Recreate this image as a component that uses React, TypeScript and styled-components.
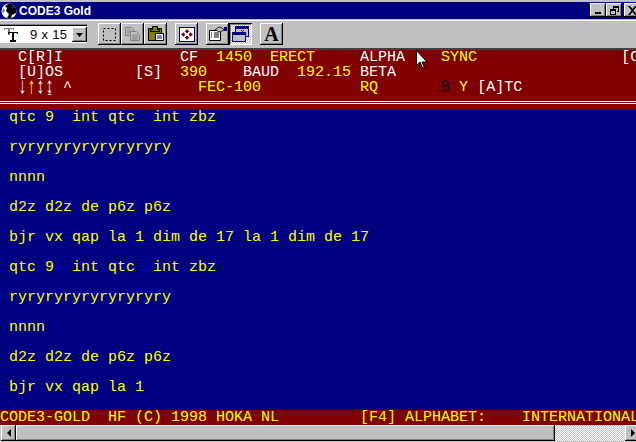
import React, { FC, ReactNode } from 'react';
import styled, { createGlobalStyle, css } from 'styled-components';

const GlobalStyle = createGlobalStyle`
    html, body {
        margin: 0;
        padding: 0;
        background: #c0c0c0;
    }
`;

const raised = css`
    box-shadow: inset -1px -1px 0 #000, inset 1px 1px 0 #fff, inset -2px -2px 0 #808080;
`;

const Window = styled.div`
    position: relative;
    width: 636px;
    height: 442px;
    overflow: hidden;
    display: flex;
    flex-direction: column;
    background: #c0c0c0;
    padding-top: 2px;
    box-sizing: border-box;
`;

const TitleBar = styled.div`
    height: 17px;
    flex: none;
    background: #000080;
    display: flex;
    align-items: center;
    padding-left: 1px;
    gap: 2px;
`;

const TitleText = styled.span`
    font: bold 12px 'Liberation Sans', Arial, sans-serif;
    color: #fff;
    flex: 1;
`;

const TitleButtons = styled.div`
    display: flex;
    align-self: flex-start;
    margin: 1px -4px 0 0;
`;

const TitleButton = styled.div<{ $gap?: number }>`
    width: 16px;
    height: 14px;
    margin-left: ${(p) => p.$gap ?? 0}px;
    background: #c0c0c0;
    ${raised}
    display: flex;
    align-items: center;
    justify-content: center;
`;

const Toolbar = styled.div`
    height: 31px;
    flex: none;
    box-sizing: border-box;
    border-top: 1px solid #c0c0c0;
    box-shadow: inset 0 1px 0 #fff;
    display: flex;
    align-items: center;
    border-bottom: 2px solid #404040;
`;

const Combo = styled.div`
    width: 88px;
    height: 20px;
    margin-right: 10px;
    box-sizing: border-box;
    background: #fff;
    box-shadow: inset -1px -1px 0 #c0c0c0, inset 0 1px 0 #808080, inset 0 2px 0 #000;
    display: flex;
    align-items: center;
    padding: 2px 1px 1px 4px;
`;

const ComboValue = styled.span`
    flex: 1;
    font: 13px 'Liberation Sans', Arial, sans-serif;
    letter-spacing: 0.3px;
    white-space: pre;
    color: #000;
    margin-left: 12px;
`;

const ComboArrow = styled.div`
    width: 15px;
    height: 15px;
    background: #c0c0c0;
    ${raised}
    display: flex;
    align-items: center;
    justify-content: center;
`;

const ToolButton = styled.div<{ $pressed?: boolean; $gap?: number }>`
    width: 23px;
    height: 22px;
    margin-left: ${(p) => p.$gap ?? 0}px;
    display: flex;
    align-items: center;
    justify-content: center;
    ${(p) =>
        p.$pressed
            ? css`
                  background: repeating-conic-gradient(#c0c0c0 0 25%, #fff 0 50%) 0 0 / 2px 2px;
                  box-shadow: inset 1px 1px 0 #000, inset -1px -1px 0 #fff, inset 2px 2px 0 #808080;
              `
            : raised}
`;

const LetterIcon = styled.span`
    font: bold 20px 'Liberation Serif', serif;
    color: #000;
    line-height: 1;
`;

const Mono = css`
    font-family: 'Liberation Mono', 'DejaVu Sans Mono', monospace;
    font-size: 15px;
    line-height: 15px;
    white-space: pre;
`;

const StatusPanel = styled.div`
    height: 60px;
    flex: none;
    background: #800000;
    box-sizing: border-box;
    position: relative;
`;

const PanelRow = styled.div`
    ${Mono}
    height: 15px;
`;

const Tone = styled.span<{ $tone: 'white' | 'yellow' | 'black' }>`
    color: ${(p) => (p.$tone === 'white' ? '#fff' : p.$tone === 'yellow' ? '#ffff00' : '#000')};
`;

const TallChar = styled.span<{ $tone: 'white' | 'yellow' }>`
    display: inline-block;
    width: 9px;
    text-align: center;
    color: ${(p) => (p.$tone === 'white' ? '#fff' : '#ffff00')};
    transform: scaleY(1.5);
`;

const Rule = styled.div`
    margin-top: 6px;
    height: 1px;
    background: #fff;
    & + & {
        margin-top: 1px;
    }
`;

const Receive = styled.div`
    flex: 1;
    background: #000080;
    display: flex;
    flex-direction: column;
    gap: 15px;
    padding-left: 9px;
    overflow: hidden;
`;

const ReceiveLine = styled.div`
    ${Mono}
    height: 15px;
    color: #ffff00;
`;

const Footer = styled.div`
    ${Mono}
    height: 15px;
    flex: none;
    background: #800000;
    color: #ffff00;
    overflow: hidden;
`;

const ScrollBar = styled.div`
    height: 16px;
    flex: none;
    display: flex;
    align-items: stretch;
    margin-bottom: 1px;
    box-shadow: inset 0 1px 0 #fff;
`;

const ScrollButton = styled.div<{ $overhang?: boolean }>`
    width: 15px;
    flex: none;
    margin: ${(p) => (p.$overhang ? '0 -4px 0 0' : '0 0 0 1px')};
    background: #c0c0c0;
    ${raised}
    display: flex;
    align-items: center;
    justify-content: center;
`;

const ScrollThumb = styled.div`
    width: 539px;
    flex: none;
    background: #c0c0c0;
    ${raised}
`;

const ScrollTrack = styled.div`
    flex: 1;
    background: repeating-conic-gradient(#c0c0c0 0 25%, #fff 0 50%) 0 0 / 2px 2px;
`;

const Pointer = styled.svg`
    position: absolute;
    left: 416px;
    top: 50px;
`;

const AppIcon: FC = () => (
    <svg width="16" height="16" viewBox="0 0 16 16">
        <circle cx="8" cy="8" r="7.5" fill="#fff" />
        <path d="M8 .5A7.5 7.5 0 0 1 15 10L11 12 10 15.500A7.500 7.500 0 0 1 6 15L8 11 5 8 6 5 4 3Z" fill="#000" />
        <path d="M2 5l2 2-1 3-2-1zM12 3l1 1-2 1z" fill="#808080" />
    </svg>
);

const FontIcon: FC = () => (
    <svg width="14" height="14" viewBox="0 0 14 14">
        <path d="M0 0h10v2H9V1H6v6H4V1H1v1H0z" fill="#808080" />
        <path d="M4 4h10v2h-1V5h-3v7h2v2H6v-2h2V5H5v1H4z" fill="#000" />
    </svg>
);

const SelectIcon: FC = () => (
    <svg width="15" height="15" viewBox="0 0 15 15">
        <rect x="1.500" y="1.500" width="12" height="12" fill="none" stroke="#000" strokeDasharray="2 2" />
    </svg>
);

const CopyIcon: FC = () => (
    <svg width="16" height="14" viewBox="0 0 16 14" fill="none" stroke="#808080">
        <path d="M.5.5h6l2 2v3M.5.500v8h4" />
        <path d="M2 3h4M2 5h4M2 7h2" />
        <path d="M5.500 4.500h6l3 3v6h-9z" fill="#c0c0c0" />
        <path d="M7 8h6M7 10h6M7 12h6" />
    </svg>
);

const PasteIcon: FC = () => (
    <svg width="16" height="16" viewBox="0 0 16 16">
        <path d="M.5 2.500h13v12h-13z" fill="#808000" stroke="#000" />
        <path d="M4.500.5h5v3h2v2h-9v-2h2z" fill="#808000" stroke="#000" />
        <path d="M7.500 7.500h8v7h-8z" fill="#fff" stroke="#000" />
        <path d="M9 10h5M9 12h5" stroke="#000080" />
    </svg>
);

const MoveIcon: FC = () => (
    <svg width="16" height="15" viewBox="0 0 16 15">
        <rect x=".5" y=".5" width="15" height="14" fill="#fff" stroke="#000080" />
        <path d="M8 2l2.500 3h-5zM8 13l-2.500-3h5zM2 7.500l3-2.500v5zM14 7.500l-3 2.500V5z" fill="#800000" />
        <path d="M7 4h2v2H7zM7 9h2v2H7zM4 6.500h2v2H4zM10 6.500h2v2h-2z" fill="#800000" />
    </svg>
);

const PropsIcon: FC = () => (
    <svg width="18" height="16" viewBox="0 0 18 16">
        <path d="M.5 4.500h11v10H.5z" fill="#fff" stroke="#000" />
        <path d="M2 7h1M5 7h5M2 9h1M5 9h5M2 11h1M5 11h5" stroke="#000" />
        <path d="M6 4l4-3 3 1 2 2-4 2z" fill="#c0c0c0" stroke="#000" strokeWidth=".8" />
        <rect x="15" y="1" width="3" height="4" fill="#000080" />
    </svg>
);

const WindowsIcon: FC = () => (
    <svg width="17" height="16" viewBox="0 0 17 16">
        <rect x="3.500" y=".5" width="13" height="10" fill="#c0c0c0" stroke="#000080" />
        <rect x="3" y="0" width="14" height="3" fill="#000080" />
        <path d="M9 4h1v1H9zM11 4h1v1h-1zM10 5h1v1h-1z" fill="#800000" />
        <rect x=".5" y="6.500" width="13" height="9" fill="#c0c0c0" stroke="#000080" />
        <rect x="0" y="6" width="14" height="3" fill="#000080" />
    </svg>
);

const Glyph: FC<{ d: string; w?: number; h?: number; fill?: string }> = ({ d, w = 9, h = 9, fill = '#000' }) => (
    <svg width={w} height={h} viewBox={`0 0 ${w} ${h}`}>
        <path d={d} fill={fill} />
    </svg>
);

const Row: FC<{ children: ReactNode }> = ({ children }) => <PanelRow>{children}</PanelRow>;

const lines = [
    'qtc 9  int qtc  int zbz',
    'ryryryryryryryryry',
    'nnnn',
    'd2z d2z de p6z p6z',
    'bjr vx qap la 1 dim de 17 la 1 dim de 17',
    'qtc 9  int qtc  int zbz',
    'ryryryryryryryryry',
    'nnnn',
    'd2z d2z de p6z p6z',
    'bjr vx qap la 1',
];

export default function App() {
    return (
        <Window>
            <GlobalStyle />
            <TitleBar>
                <AppIcon />
                <TitleText>CODE3 Gold</TitleText>
                <TitleButtons>
                    <TitleButton>
                        <Glyph d="M1 6h6v2H1z" w={9} h={9} />
                    </TitleButton>
                    <TitleButton>
                        <Glyph d="M3 0h6v6H7V5h1V2H4v1H3zM0 3h6v6H0zM1 5v3h4V5z" />
                    </TitleButton>
                    <TitleButton $gap={2}>
                        <Glyph d="M0 0h2l2.500 3L7 0h2L5.500 4.500 9 9H7L4.500 6 2 9H0l3.500-4.500z" />
                    </TitleButton>
                </TitleButtons>
            </TitleBar>
            <Toolbar>
                <Combo>
                    <FontIcon />
                    <ComboValue>9 x 15</ComboValue>
                    <ComboArrow>
                        <Glyph d="M0 0h7L3.500 4z" w={7} h={4} />
                    </ComboArrow>
                </Combo>
                <ToolButton>
                    <SelectIcon />
                </ToolButton>
                <ToolButton>
                    <CopyIcon />
                </ToolButton>
                <ToolButton>
                    <PasteIcon />
                </ToolButton>
                <ToolButton $gap={8}>
                    <MoveIcon />
                </ToolButton>
                <ToolButton $gap={8}>
                    <PropsIcon />
                </ToolButton>
                <ToolButton $pressed>
                    <WindowsIcon />
                </ToolButton>
                <ToolButton $gap={8}>
                    <LetterIcon>A</LetterIcon>
                </ToolButton>
            </Toolbar>
            <StatusPanel>
                <Row>
                    <Tone $tone="white">{'  C[R]I'}</Tone>
                    <Tone $tone="white">{'             CF'}</Tone>
                    <Tone $tone="yellow">{'  1450  ERECT'}</Tone>
                    <Tone $tone="white">{'     ALPHA'}</Tone>
                    <Tone $tone="yellow">{'    SYNC'}</Tone>
                    <Tone $tone="white">{'                [C'}</Tone>
                </Row>
                <Row>
                    <Tone $tone="white">{'  [U]OS        [S]'}</Tone>
                    <Tone $tone="yellow">{'  390'}</Tone>
                    <Tone $tone="white">{'    BAUD'}</Tone>
                    <Tone $tone="yellow">{'  192.15'}</Tone>
                    <Tone $tone="white">{' BETA'}</Tone>
                    <Tone $tone="white">{'                           513'}</Tone>
                </Row>
                <Row>
                    <Tone $tone="white">{'  '}</Tone>
                    <TallChar $tone="white">↓</TallChar>
                    <TallChar $tone="yellow">↑</TallChar>
                    <TallChar $tone="white">↕</TallChar>
                    <TallChar $tone="white">↨</TallChar>
                    <Tone $tone="white">{' ^'}</Tone>
                    <Tone $tone="yellow">{'              FEC-100'}</Tone>
                    <Tone $tone="yellow">{'           RQ'}</Tone>
                    <Tone $tone="black">{'       B'}</Tone>
                    <Tone $tone="yellow">{' Y'}</Tone>
                    <Tone $tone="white">{' [A]TC'}</Tone>
                </Row>
                <Rule />
                <Rule />
            </StatusPanel>
            <Receive>
                {lines.map((line, i) => (
                    <ReceiveLine key={i}>{line}</ReceiveLine>
                ))}
            </Receive>
            <Footer>{'CODE3-GOLD  HF (C) 1998 HOKA NL         [F4] ALPHABET:    INTERNATIONAL'}</Footer>
            <ScrollBar>
                <ScrollButton>
                    <Glyph d="M4 0v8L0 4z" w={4} h={8} />
                </ScrollButton>
                <ScrollThumb />
                <ScrollTrack />
                <ScrollButton $overhang>
                    <Glyph d="M0 0v8l4-4z" w={4} h={8} />
                </ScrollButton>
            </ScrollBar>
            <Pointer width="11" height="19" viewBox="0 0 11 19">
                <path d="M.5.5v15l3.500-3.500 2.500 6h2l-2.500-6h5z" fill="#fff" stroke="#000" />
            </Pointer>
        </Window>
    );
}
